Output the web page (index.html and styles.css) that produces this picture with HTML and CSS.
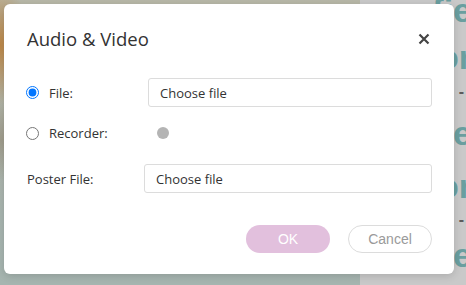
FILE: index.html
```html
<!DOCTYPE html>
<html>
<head>
<meta charset="utf-8">
<link rel="stylesheet" href="styles.css">
</head>
<body>
<div class="page">
  <div class="photo"></div>
  <div class="side">
    <div class="side-line">fie</div>
    <div class="side-line">or</div>
    <div class="side-dash">- -</div>
    <div class="side-line">ie</div>
    <div class="side-line">or</div>
    <div class="side-dash">- -</div>
    <div class="side-line">ye</div>
  </div>
</div>
<div class="modal">
  <div class="modal-header">
    <div class="modal-title">Audio &amp; Video</div>
    <svg class="close" width="12" height="12" viewBox="0 0 12 12"><path d="M1.5 1.5 L10.5 10.5 M10.5 1.5 L1.5 10.5" stroke="#444" stroke-width="2.2" stroke-linecap="butt"/></svg>
  </div>
  <div class="row row-file">
    <input type="radio" name="src" class="radio" checked>
    <span class="label label-file">File:</span>
    <div class="file-input">Choose file</div>
  </div>
  <div class="row row-rec">
    <input type="radio" name="src" class="radio">
    <span class="label label-rec">Recorder:</span>
    <span class="rec-dot"></span>
  </div>
  <div class="row row-poster">
    <span class="label label-poster">Poster File:</span>
    <div class="file-input">Choose file</div>
  </div>
  <div class="footer">
    <button class="btn btn-ok">OK</button>
    <button class="btn btn-cancel">Cancel</button>
  </div>
</div>
</body>
</html>
```
FILE: styles.css
```css
html, body {
  margin: 0;
  padding: 0;
}
body {
  width: 466px;
  height: 285px;
  overflow: hidden;
  position: relative;
  font-family: "Open Sans", "Noto Sans", sans-serif;
}
.page {
  display: flex;
  width: 466px;
  height: 285px;
}
.photo {
  width: 360px;
  height: 285px;
  background:
    radial-gradient(ellipse 30px 60px at 0px 45px, rgba(190,130,60,0.9), rgba(190,130,60,0) 100%),
    radial-gradient(ellipse 40px 40px at 0px 140px, rgba(150,140,120,0.6), rgba(150,140,120,0) 100%),
    linear-gradient(180deg, #b8b8a8 0%, #b1b5a9 40%, #a9b6b0 75%, #a6b5b0 100%);
}
.side {
  flex: 1;
  background: #c9c9c9;
  display: grid;
  grid-template-rows: 48px 46px 24px 58px 48px 20px 50px;
  justify-items: end;
  align-items: center;
  margin-top: -14px;
  color: #6a9fa0;
  font-family: "Liberation Sans", Arial, sans-serif;
  font-weight: bold;
  font-size: 34px;
  line-height: 34px;
}
.side-line {
  margin-right: -6px;
}
.side-dash {
  color: #5c5c5c;
  font-size: 16px;
  line-height: 16px;
  letter-spacing: 2px;
}
.modal {
  position: absolute;
  left: 4px;
  top: 4px;
  width: 450px;
  height: 270px;
  box-sizing: border-box;
  background: #fff;
  border-radius: 6px;
  box-shadow: 0 2px 8px rgba(0,0,0,0.15);
  padding: 21px 22px 0 22px;
  display: flex;
  flex-direction: column;
  color: #333;
}
.modal-header {
  display: flex;
  align-items: center;
  justify-content: space-between;
  height: 28px;
  padding-left: 1px;
}
.modal-title {
  font-size: 18.5px;
  line-height: 28px;
  color: #333;
}
.close {
  margin-right: 2px;
}
.row {
  display: flex;
  align-items: center;
  font-size: 13px;
}
.row-file {
  margin-top: 25px;
  height: 29px;
}
.row-rec {
  margin-top: 16px;
  height: 20px;
}
.row-poster {
  margin-top: 21px;
  height: 29px;
}
.radio {
  margin: 0;
  width: 13px;
  height: 13px;
  accent-color: #0075ff;
}
.label {
  color: #333;
  font-size: 13px;
}
.label-file {
  margin-left: 10px;
  width: 99px;
}
.label-rec {
  margin-left: 10px;
  width: 108px;
}
.label-poster {
  margin-left: 1px;
  width: 117px;
}
.file-input {
  flex: 1;
  height: 29px;
  box-sizing: border-box;
  border: 1px solid #dcdcdc;
  border-radius: 3px;
  padding-left: 11px;
  display: flex;
  align-items: center;
  font-size: 13px;
  color: #333;
}
.rec-dot {
  width: 12px;
  height: 12px;
  border-radius: 50%;
  background: #b4b4b4;
}
.footer {
  margin-top: 32px;
  display: flex;
  justify-content: flex-end;
  gap: 18px;
}
.btn {
  width: 84px;
  height: 28px;
  border-radius: 14px;
  font-family: "Liberation Sans", Arial, sans-serif;
  font-size: 14px;
  padding: 0;
  cursor: pointer;
}
.btn-ok {
  background: #e2c0dd;
  border: none;
  color: #fff;
}
.btn-cancel {
  background: #fff;
  border: 1px solid #dcdcdc;
  color: #9a9a9a;
}
```
